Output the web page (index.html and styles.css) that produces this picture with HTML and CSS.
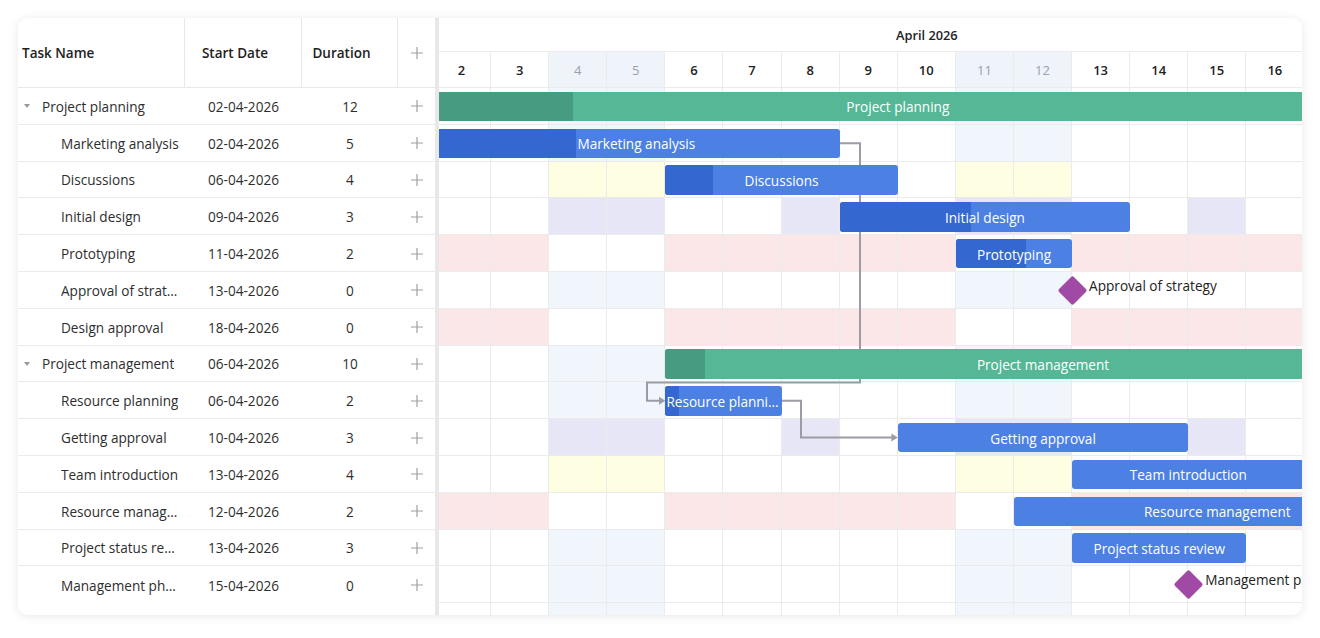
FILE: index.html
```html
<!DOCTYPE html>
<html>
<head>
<meta charset="utf-8">
<link rel="stylesheet" href="styles.css">
</head>
<body>
<div class="card">
  <div class="grid">
    <div class="grid-head">
      <div class="hc c-name">Task Name</div>
      <div class="hc c-start">Start Date</div>
      <div class="hc c-dur">Duration</div>
      <div class="hc c-add"><svg class="plus" viewBox="0 0 12 12"><path d="M6 0V12M0 6H12"/></svg></div>
    </div>
    <div class="grid-body">
      <div class="grow parent"><div class="gc c-name"><span class="caret"></span><span class="nm">Project planning</span></div><div class="gc c-start">02-04-2026</div><div class="gc c-dur">12</div><div class="gc c-add"><svg class="plus" viewBox="0 0 12 12"><path d="M6 0V12M0 6H12"/></svg></div></div>
      <div class="grow child"><div class="gc c-name"><span class="nm">Marketing analysis</span></div><div class="gc c-start">02-04-2026</div><div class="gc c-dur">5</div><div class="gc c-add"><svg class="plus" viewBox="0 0 12 12"><path d="M6 0V12M0 6H12"/></svg></div></div>
      <div class="grow child"><div class="gc c-name"><span class="nm">Discussions</span></div><div class="gc c-start">06-04-2026</div><div class="gc c-dur">4</div><div class="gc c-add"><svg class="plus" viewBox="0 0 12 12"><path d="M6 0V12M0 6H12"/></svg></div></div>
      <div class="grow child"><div class="gc c-name"><span class="nm">Initial design</span></div><div class="gc c-start">09-04-2026</div><div class="gc c-dur">3</div><div class="gc c-add"><svg class="plus" viewBox="0 0 12 12"><path d="M6 0V12M0 6H12"/></svg></div></div>
      <div class="grow child"><div class="gc c-name"><span class="nm">Prototyping</span></div><div class="gc c-start">11-04-2026</div><div class="gc c-dur">2</div><div class="gc c-add"><svg class="plus" viewBox="0 0 12 12"><path d="M6 0V12M0 6H12"/></svg></div></div>
      <div class="grow child"><div class="gc c-name"><span class="nm">Approval of strategy</span></div><div class="gc c-start">13-04-2026</div><div class="gc c-dur">0</div><div class="gc c-add"><svg class="plus" viewBox="0 0 12 12"><path d="M6 0V12M0 6H12"/></svg></div></div>
      <div class="grow child"><div class="gc c-name"><span class="nm">Design approval</span></div><div class="gc c-start">18-04-2026</div><div class="gc c-dur">0</div><div class="gc c-add"><svg class="plus" viewBox="0 0 12 12"><path d="M6 0V12M0 6H12"/></svg></div></div>
      <div class="grow parent"><div class="gc c-name"><span class="caret"></span><span class="nm">Project management</span></div><div class="gc c-start">06-04-2026</div><div class="gc c-dur">10</div><div class="gc c-add"><svg class="plus" viewBox="0 0 12 12"><path d="M6 0V12M0 6H12"/></svg></div></div>
      <div class="grow child"><div class="gc c-name"><span class="nm">Resource planning</span></div><div class="gc c-start">06-04-2026</div><div class="gc c-dur">2</div><div class="gc c-add"><svg class="plus" viewBox="0 0 12 12"><path d="M6 0V12M0 6H12"/></svg></div></div>
      <div class="grow child"><div class="gc c-name"><span class="nm">Getting approval</span></div><div class="gc c-start">10-04-2026</div><div class="gc c-dur">3</div><div class="gc c-add"><svg class="plus" viewBox="0 0 12 12"><path d="M6 0V12M0 6H12"/></svg></div></div>
      <div class="grow child"><div class="gc c-name"><span class="nm">Team introduction</span></div><div class="gc c-start">13-04-2026</div><div class="gc c-dur">4</div><div class="gc c-add"><svg class="plus" viewBox="0 0 12 12"><path d="M6 0V12M0 6H12"/></svg></div></div>
      <div class="grow child"><div class="gc c-name"><span class="nm">Resource management</span></div><div class="gc c-start">12-04-2026</div><div class="gc c-dur">2</div><div class="gc c-add"><svg class="plus" viewBox="0 0 12 12"><path d="M6 0V12M0 6H12"/></svg></div></div>
      <div class="grow child"><div class="gc c-name"><span class="nm">Project status review</span></div><div class="gc c-start">13-04-2026</div><div class="gc c-dur">3</div><div class="gc c-add"><svg class="plus" viewBox="0 0 12 12"><path d="M6 0V12M0 6H12"/></svg></div></div>
      <div class="grow child"><div class="gc c-name"><span class="nm">Management phase</span></div><div class="gc c-start">15-04-2026</div><div class="gc c-dur">0</div><div class="gc c-add"><svg class="plus" viewBox="0 0 12 12"><path d="M6 0V12M0 6H12"/></svg></div></div>
    </div>
  </div>
  <div class="divider"></div>
  <div class="chart">
    <div class="timeline">
      <div class="scale-month">April 2026</div>
      <div class="scale-days">
        <div class="day">2</div><div class="day">3</div><div class="day w">4</div><div class="day w">5</div><div class="day">6</div><div class="day">7</div><div class="day">8</div><div class="day">9</div><div class="day">10</div><div class="day w">11</div><div class="day w">12</div><div class="day">13</div><div class="day">14</div><div class="day">15</div><div class="day">16</div><div class="day">17</div><div class="day w">18</div>
      </div>
      <div class="chart-body">
        <svg class="links" viewBox="0 0 988 527" width="988" height="527">
          <path d="M406.7 55.2H427V294.4H214V312.8H227"/>
          <polygon points="226,308.8 232.4,312.8 226,316.8"/>
          <path d="M348.6 312.8H368V349.6H459"/>
          <polygon points="458.4,345.6 464.8,349.6 458.4,353.6"/>
        </svg>

        <div class="trow r-blue"><i class="cell"></i><i class="cell"></i><i class="cell w"></i><i class="cell w"></i><i class="cell"></i><i class="cell"></i><i class="cell x"></i><i class="cell"></i><i class="cell"></i><i class="cell w"></i><i class="cell w"></i><i class="cell"></i><i class="cell"></i><i class="cell x"></i><i class="cell"></i><i class="cell"></i><i class="cell w"></i>
          <div class="bar green" style="left:0px;width:929.6px"><span class="prog" style="width:140px"></span><span class="lbl">Project planning</span></div>
        </div>
        <div class="trow r-blue"><i class="cell"></i><i class="cell"></i><i class="cell w"></i><i class="cell w"></i><i class="cell"></i><i class="cell"></i><i class="cell x"></i><i class="cell"></i><i class="cell"></i><i class="cell w"></i><i class="cell w"></i><i class="cell"></i><i class="cell"></i><i class="cell x"></i><i class="cell"></i><i class="cell"></i><i class="cell w"></i>
          <div class="bar blue" style="left:0px;width:406.7px"><span class="prog" style="width:143px"></span><span class="lbl">Marketing analysis</span></div>
        </div>
        <div class="trow r-yellow"><i class="cell"></i><i class="cell"></i><i class="cell w"></i><i class="cell w"></i><i class="cell"></i><i class="cell"></i><i class="cell x"></i><i class="cell"></i><i class="cell"></i><i class="cell w"></i><i class="cell w"></i><i class="cell"></i><i class="cell"></i><i class="cell x"></i><i class="cell"></i><i class="cell"></i><i class="cell w"></i>
          <div class="bar blue" style="left:232.4px;width:232.4px"><span class="prog" style="width:48px"></span><span class="lbl">Discussions</span></div>
        </div>
        <div class="trow r-lav"><i class="cell"></i><i class="cell"></i><i class="cell w"></i><i class="cell w"></i><i class="cell"></i><i class="cell"></i><i class="cell x"></i><i class="cell"></i><i class="cell"></i><i class="cell w"></i><i class="cell w"></i><i class="cell"></i><i class="cell"></i><i class="cell x"></i><i class="cell"></i><i class="cell"></i><i class="cell w"></i>
          <div class="bar blue" style="left:406.7px;width:290.5px"><span class="prog" style="width:131px"></span><span class="lbl">Initial design</span></div>
        </div>
        <div class="trow r-pink"><i class="cell"></i><i class="cell"></i><i class="cell w"></i><i class="cell w"></i><i class="cell"></i><i class="cell"></i><i class="cell x"></i><i class="cell"></i><i class="cell"></i><i class="cell w"></i><i class="cell w"></i><i class="cell"></i><i class="cell"></i><i class="cell x"></i><i class="cell"></i><i class="cell"></i><i class="cell w"></i>
          <div class="bar blue" style="left:522.9px;width:116.2px"><span class="prog" style="width:70px"></span><span class="lbl">Prototyping</span></div>
        </div>
        <div class="trow r-blue"><i class="cell"></i><i class="cell"></i><i class="cell w"></i><i class="cell w"></i><i class="cell"></i><i class="cell"></i><i class="cell x"></i><i class="cell"></i><i class="cell"></i><i class="cell w"></i><i class="cell w"></i><i class="cell"></i><i class="cell"></i><i class="cell x"></i><i class="cell"></i><i class="cell"></i><i class="cell w"></i>
          <div class="milestone" style="left:639.1px"><span class="diamond"></span><span class="ms-label">Approval of strategy</span></div>
        </div>
        <div class="trow r-pink"><i class="cell"></i><i class="cell"></i><i class="cell w"></i><i class="cell w"></i><i class="cell"></i><i class="cell"></i><i class="cell x"></i><i class="cell"></i><i class="cell"></i><i class="cell w"></i><i class="cell w"></i><i class="cell"></i><i class="cell"></i><i class="cell x"></i><i class="cell"></i><i class="cell"></i><i class="cell w"></i>
          <div class="milestone" style="left:929.6px"><span class="diamond"></span><span class="ms-label">Design approval</span></div>
        </div>
        <div class="trow r-blue"><i class="cell"></i><i class="cell"></i><i class="cell w"></i><i class="cell w"></i><i class="cell"></i><i class="cell"></i><i class="cell x"></i><i class="cell"></i><i class="cell"></i><i class="cell w"></i><i class="cell w"></i><i class="cell"></i><i class="cell"></i><i class="cell x"></i><i class="cell"></i><i class="cell"></i><i class="cell w"></i>
          <div class="bar green" style="left:232.4px;width:755.3px"><span class="prog" style="width:40px"></span><span class="lbl">Project management</span></div>
        </div>
        <div class="trow r-blue"><i class="cell"></i><i class="cell"></i><i class="cell w"></i><i class="cell w"></i><i class="cell"></i><i class="cell"></i><i class="cell x"></i><i class="cell"></i><i class="cell"></i><i class="cell w"></i><i class="cell w"></i><i class="cell"></i><i class="cell"></i><i class="cell x"></i><i class="cell"></i><i class="cell"></i><i class="cell w"></i>
          <div class="bar blue" style="left:232.4px;width:116.2px"><span class="prog" style="width:14px"></span><span class="lbl">Resource planning</span></div>
        </div>
        <div class="trow r-lav"><i class="cell"></i><i class="cell"></i><i class="cell w"></i><i class="cell w"></i><i class="cell"></i><i class="cell"></i><i class="cell x"></i><i class="cell"></i><i class="cell"></i><i class="cell w"></i><i class="cell w"></i><i class="cell"></i><i class="cell"></i><i class="cell x"></i><i class="cell"></i><i class="cell"></i><i class="cell w"></i>
          <div class="bar blue" style="left:464.8px;width:290.5px"><span class="lbl">Getting approval</span></div>
        </div>
        <div class="trow r-yellow"><i class="cell"></i><i class="cell"></i><i class="cell w"></i><i class="cell w"></i><i class="cell"></i><i class="cell"></i><i class="cell x"></i><i class="cell"></i><i class="cell"></i><i class="cell w"></i><i class="cell w"></i><i class="cell"></i><i class="cell"></i><i class="cell x"></i><i class="cell"></i><i class="cell"></i><i class="cell w"></i>
          <div class="bar blue" style="left:639.1px;width:232.4px"><span class="lbl">Team introduction</span></div>
        </div>
        <div class="trow r-pink"><i class="cell"></i><i class="cell"></i><i class="cell w"></i><i class="cell w"></i><i class="cell"></i><i class="cell"></i><i class="cell x"></i><i class="cell"></i><i class="cell"></i><i class="cell w"></i><i class="cell w"></i><i class="cell"></i><i class="cell"></i><i class="cell x"></i><i class="cell"></i><i class="cell"></i><i class="cell w"></i>
          <div class="bar blue" style="left:581px;width:406.7px"><span class="lbl">Resource management</span></div>
        </div>
        <div class="trow r-blue"><i class="cell"></i><i class="cell"></i><i class="cell w"></i><i class="cell w"></i><i class="cell"></i><i class="cell"></i><i class="cell x"></i><i class="cell"></i><i class="cell"></i><i class="cell w"></i><i class="cell w"></i><i class="cell"></i><i class="cell"></i><i class="cell x"></i><i class="cell"></i><i class="cell"></i><i class="cell w"></i>
          <div class="bar blue" style="left:639.1px;width:174.3px"><span class="lbl">Project status review</span></div>
        </div>
        <div class="trow r-blue"><i class="cell"></i><i class="cell"></i><i class="cell w"></i><i class="cell w"></i><i class="cell"></i><i class="cell"></i><i class="cell x"></i><i class="cell"></i><i class="cell"></i><i class="cell w"></i><i class="cell w"></i><i class="cell"></i><i class="cell"></i><i class="cell x"></i><i class="cell"></i><i class="cell"></i><i class="cell w"></i>
          <div class="milestone" style="left:755.3px"><span class="diamond"></span><span class="ms-label">Management phase</span></div>
        </div>
        <div class="trow r-blue filler"><i class="cell"></i><i class="cell"></i><i class="cell w"></i><i class="cell w"></i><i class="cell"></i><i class="cell"></i><i class="cell x"></i><i class="cell"></i><i class="cell"></i><i class="cell w"></i><i class="cell w"></i><i class="cell"></i><i class="cell"></i><i class="cell x"></i><i class="cell"></i><i class="cell"></i><i class="cell w"></i></div>
      </div>
    </div>
  </div>
</div>
</body>
</html>
```

FILE: styles.css
```css
* { box-sizing: border-box; }
html, body { margin: 0; padding: 0; background: #fff; }
body {
  font-family: "Open Sans", "Liberation Sans", sans-serif;
  color: #333;
}

.card {
  margin: 18px;
  width: 1284px;
  height: 597px;
  border-radius: 10px;
  box-shadow: 0 1px 10px rgba(0, 0, 0, 0.10);
  overflow: hidden;
  display: flex;
  background: #fff;
}

/* ---------- left grid ---------- */
.grid { width: 417px; flex: none; }

.grid-head {
  height: 70px;
  display: flex;
  border-bottom: 1px solid #e8e8e8;
}
.hc {
  display: flex;
  align-items: center;
  font-size: 13.5px;
  font-weight: 600;
  color: #222;
  border-right: 1px solid #e9e9e9;
}
.hc.c-start, .hc.c-dur { justify-content: center; padding-right: 16px; }
.hc.c-add { justify-content: center; border-right: none; }

.c-name { width: 167px; padding-left: 4px; padding-right: 4px; }
.c-start { width: 117px; }
.c-dur { width: 96px; }
.c-add { width: 37px; }

.grow {
  height: 36.8px;
  display: flex;
  align-items: center;
  border-bottom: 1px solid #ebebeb;
  padding-top: 1px;
  font-size: 13.6px;
  color: #2e2e2e;
}
.grow:last-child { border-bottom: none; }
.gc { display: flex; align-items: center; height: 100%; }
.gc.c-start, .gc.c-dur, .gc.c-add { justify-content: center; }
.gc.c-name { min-width: 0; }
.child .c-name { padding-left: 43px; }
.nm { white-space: nowrap; overflow: hidden; text-overflow: ellipsis; }

.caret {
  flex: none;
  width: 0;
  height: 0;
  margin-left: 2px;
  margin-right: 12px;
  border-left: 3.5px solid transparent;
  border-right: 3.5px solid transparent;
  border-top: 4px solid #9a9a9a;
}

.plus { width: 12px; height: 12px; display: block; }
.plus path { stroke: #a0a0a0; stroke-width: 1.2; fill: none; }

.divider { width: 4px; flex: none; background: #e8e8e8; }

/* ---------- chart ---------- */
.chart { flex: 1; overflow: hidden; min-width: 0; }
.timeline { width: 987.7px; margin-left: -6px; }

.scale-month {
  height: 34px;
  border-bottom: 1px solid #ebebeb;
  display: flex;
  align-items: center;
  justify-content: center;
  font-size: 12.8px;
  font-weight: 600;
  color: #222;
}
.scale-days {
  height: 36px;
  display: flex;
  border-bottom: 1px solid #ebebeb;
}
.day {
  width: 58.1px;
  flex: none;
  border-right: 1px solid #ebebeb;
  display: flex;
  align-items: center;
  justify-content: center;
  font-size: 13px;
  font-weight: 600;
  color: #222;
}
.day.w { background: #eff3fa; color: #9aa0a8; font-weight: 400; }

.chart-body { position: relative; height: 527px; }

.links { position: absolute; left: 0; top: 0; z-index: 1; }
.links path { fill: none; stroke: #9c9ca4; stroke-width: 2; }
.links polygon { fill: #9c9ca4; }

.trow {
  position: relative;
  height: 36.8px;
  display: flex;
  border-bottom: 1px solid #ebebeb;
}
.trow.filler { height: 15px; border-bottom: none; }
.cell {
  width: 58.1px;
  flex: none;
  border-right: 1px solid #ebebeb;
}
.r-blue .w { background: #f1f5fc; }
.r-yellow .w { background: #fefee3; }
.r-lav .w, .r-lav .x { background: #e7e6f7; }
.r-pink .cell { background: #fbe7e8; }
.r-pink .cell.w { background: #fff; }

.bar {
  position: absolute;
  top: 3.8px;
  height: 29.4px;
  border-radius: 3px;
  color: #fff;
  font-size: 13.6px;
  display: flex;
  align-items: center;
  justify-content: center;
  padding-top: 1px;
  overflow: hidden;
  z-index: 2;
}
.bar.blue { background: #4c80e3; }
.bar.blue .prog { background: #3468d0; }
.bar.green { background: #55b795; }
.bar.green .prog { background: #479b80; }
.prog { position: absolute; left: 0; top: 0; bottom: 0; }
.lbl {
  position: relative;
  max-width: 100%;
  padding: 0 1px;
  white-space: nowrap;
  overflow: hidden;
  text-overflow: ellipsis;
}

.milestone {
  position: absolute;
  top: 0;
  height: 100%;
  z-index: 2;
}
.diamond {
  position: absolute;
  left: -10.5px;
  top: 7.9px;
  width: 21px;
  height: 21px;
  background: #a04aa6;
  border-radius: 2px;
  transform: rotate(45deg);
}
.ms-label {
  position: absolute;
  left: 17px;
  top: 4px;
  font-size: 13.6px;
  color: #222;
  white-space: nowrap;
}
```
